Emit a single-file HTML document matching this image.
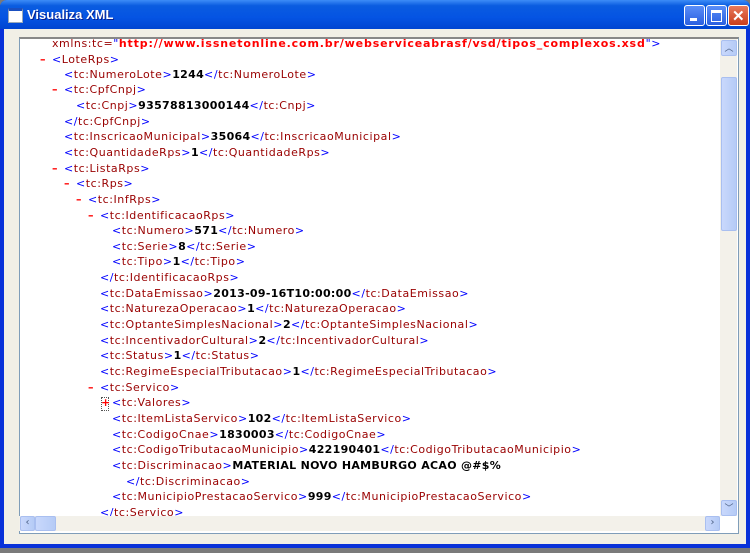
<!DOCTYPE html>
<html><head><style>
body{margin:0;width:750px;height:553px;background:#7a7a7a;position:relative;overflow:hidden;font-family:"DejaVu Sans","Liberation Sans",sans-serif}
.win{position:absolute;left:0;top:0;width:750px;height:548px;background:#0831d9;border-radius:7px 7px 0 0}
.title{position:absolute;left:0;top:0;width:750px;height:29px;background:linear-gradient(#3d8cf7,#0a5ce0 20%,#0554e3 60%,#0045d1);border-radius:7px 7px 0 0}
.title span{position:absolute;left:27px;top:7px;color:#fff;font:bold 13px "Liberation Sans",sans-serif;text-shadow:1px 1px #0a1e8c}
.ico{position:absolute;left:8px;top:8px;width:13px;height:11px;background:#fff;border:1px solid #9ab;border-top:3px solid #1a4fc0}
.btn{position:absolute;top:5px;width:19px;height:19px;border:1px solid #fff;border-radius:3px;background:linear-gradient(#5a8ef8,#2a5fe0)}
.client{position:absolute;left:4px;top:29px;width:742px;height:515px;background:#f1efe6}
.box{position:absolute;left:19px;top:37px;width:718px;height:494px;background:#fff;border:1px solid #7f9db9;border-top:2px solid #888}
.vs{position:absolute;left:720px;top:39px;width:17px;height:477px;background:#f3f1ea}
.hs{position:absolute;left:19px;top:516px;width:701px;height:15px;background:#f3f1ea}
.sb{position:absolute;background:linear-gradient(90deg,#c9d8fc,#b5cbf6);border:1px solid #a9bff0;border-radius:2px}
.l{position:absolute;font-size:11px;letter-spacing:0.55px;white-space:pre;line-height:14px;margin-top:1px}
.b{color:#0000ff}.t{color:#990000}.v{color:#000;font-weight:bold;letter-spacing:0.3px}.m{color:#ff0000;position:absolute;font-size:11px;font-weight:bold;margin-top:1px}
</style></head><body>
<div class="win"></div>
<div class="title"><div class="ico"></div><span>Visualiza XML</span>
<div class="btn" style="left:684px"><div style="position:absolute;left:5px;top:12px;width:7px;height:3px;background:#fff"></div></div>
<div class="btn" style="left:706px"><div style="position:absolute;left:4px;top:4px;width:9px;height:8px;border:1px solid #fff;border-top:3px solid #fff"></div></div>
<div class="btn" style="left:728px;background:linear-gradient(#e87a5c,#c93e1c)"><div style="position:absolute;left:3px;top:1px;color:#fff;font:bold 15px 'Liberation Sans'">✕</div></div>
</div>
<div class="client"></div>
<div class="box"></div>
<div class="vs"><div class="sb" style="left:1px;top:1px;width:14px;height:14px;color:#4d6185;font-size:9px;text-align:center">︿</div><div class="sb" style="left:1px;top:38px;width:14px;height:152px"></div><div class="sb" style="left:1px;top:461px;width:14px;height:14px;color:#4d6185;font-size:9px;text-align:center">﹀</div></div>
<div class="hs"><div class="sb" style="left:1px;top:0;width:13px;height:13px;color:#4d6185;font-size:10px;text-align:center">‹</div><div class="sb" style="left:16px;top:0;width:19px;height:13px"></div><div class="sb" style="left:686px;top:0;width:13px;height:13px;color:#4d6185;font-size:10px;text-align:center">›</div></div>

<div style="position:absolute;left:20px;top:39px;width:700px;height:12px;overflow:hidden"><div class="l" style="left:32px;top:-3px"><span class="t">xmlns:tc=</span><span class="b">"</span><span style="color:#ff0000;font-weight:bold;letter-spacing:0.85px">http://www.issnetonline.com.br/webserviceabrasf/vsd/tipos_complexos.xsd</span><span class="b">"&gt;</span></div></div>
<span class="m" style="left:40px;top:52px">–</span><div class="l" style="left:52px;top:52px"><span class="b">&lt;</span><span class="t">LoteRps</span><span class="b">&gt;</span></div>
<div class="l" style="left:64px;top:67px"><span class="b">&lt;</span><span class="t">tc:NumeroLote</span><span class="b">&gt;</span><span class="v">1244</span><span class="b">&lt;/</span><span class="t">tc:NumeroLote</span><span class="b">&gt;</span></div>
<span class="m" style="left:52px;top:82px">–</span><div class="l" style="left:64px;top:82px"><span class="b">&lt;</span><span class="t">tc:CpfCnpj</span><span class="b">&gt;</span></div>
<div class="l" style="left:76px;top:98px"><span class="b">&lt;</span><span class="t">tc:Cnpj</span><span class="b">&gt;</span><span class="v">93578813000144</span><span class="b">&lt;/</span><span class="t">tc:Cnpj</span><span class="b">&gt;</span></div>
<div class="l" style="left:64px;top:114px"><span class="b">&lt;/</span><span class="t">tc:CpfCnpj</span><span class="b">&gt;</span></div>
<div class="l" style="left:64px;top:129px"><span class="b">&lt;</span><span class="t">tc:InscricaoMunicipal</span><span class="b">&gt;</span><span class="v">35064</span><span class="b">&lt;/</span><span class="t">tc:InscricaoMunicipal</span><span class="b">&gt;</span></div>
<div class="l" style="left:64px;top:145px"><span class="b">&lt;</span><span class="t">tc:QuantidadeRps</span><span class="b">&gt;</span><span class="v">1</span><span class="b">&lt;/</span><span class="t">tc:QuantidadeRps</span><span class="b">&gt;</span></div>
<span class="m" style="left:52px;top:161px">–</span><div class="l" style="left:64px;top:161px"><span class="b">&lt;</span><span class="t">tc:ListaRps</span><span class="b">&gt;</span></div>
<span class="m" style="left:64px;top:176px">–</span><div class="l" style="left:76px;top:176px"><span class="b">&lt;</span><span class="t">tc:Rps</span><span class="b">&gt;</span></div>
<span class="m" style="left:76px;top:192px">–</span><div class="l" style="left:88px;top:192px"><span class="b">&lt;</span><span class="t">tc:InfRps</span><span class="b">&gt;</span></div>
<span class="m" style="left:88px;top:208px">–</span><div class="l" style="left:100px;top:208px"><span class="b">&lt;</span><span class="t">tc:IdentificacaoRps</span><span class="b">&gt;</span></div>
<div class="l" style="left:112px;top:223px"><span class="b">&lt;</span><span class="t">tc:Numero</span><span class="b">&gt;</span><span class="v">571</span><span class="b">&lt;/</span><span class="t">tc:Numero</span><span class="b">&gt;</span></div>
<div class="l" style="left:112px;top:239px"><span class="b">&lt;</span><span class="t">tc:Serie</span><span class="b">&gt;</span><span class="v">8</span><span class="b">&lt;/</span><span class="t">tc:Serie</span><span class="b">&gt;</span></div>
<div class="l" style="left:112px;top:254px"><span class="b">&lt;</span><span class="t">tc:Tipo</span><span class="b">&gt;</span><span class="v">1</span><span class="b">&lt;/</span><span class="t">tc:Tipo</span><span class="b">&gt;</span></div>
<div class="l" style="left:100px;top:270px"><span class="b">&lt;/</span><span class="t">tc:IdentificacaoRps</span><span class="b">&gt;</span></div>
<div class="l" style="left:100px;top:286px"><span class="b">&lt;</span><span class="t">tc:DataEmissao</span><span class="b">&gt;</span><span class="v">2013-09-16T10:00:00</span><span class="b">&lt;/</span><span class="t">tc:DataEmissao</span><span class="b">&gt;</span></div>
<div class="l" style="left:100px;top:301px"><span class="b">&lt;</span><span class="t">tc:NaturezaOperacao</span><span class="b">&gt;</span><span class="v">1</span><span class="b">&lt;/</span><span class="t">tc:NaturezaOperacao</span><span class="b">&gt;</span></div>
<div class="l" style="left:100px;top:317px"><span class="b">&lt;</span><span class="t">tc:OptanteSimplesNacional</span><span class="b">&gt;</span><span class="v">2</span><span class="b">&lt;/</span><span class="t">tc:OptanteSimplesNacional</span><span class="b">&gt;</span></div>
<div class="l" style="left:100px;top:333px"><span class="b">&lt;</span><span class="t">tc:IncentivadorCultural</span><span class="b">&gt;</span><span class="v">2</span><span class="b">&lt;/</span><span class="t">tc:IncentivadorCultural</span><span class="b">&gt;</span></div>
<div class="l" style="left:100px;top:348px"><span class="b">&lt;</span><span class="t">tc:Status</span><span class="b">&gt;</span><span class="v">1</span><span class="b">&lt;/</span><span class="t">tc:Status</span><span class="b">&gt;</span></div>
<div class="l" style="left:100px;top:364px"><span class="b">&lt;</span><span class="t">tc:RegimeEspecialTributacao</span><span class="b">&gt;</span><span class="v">1</span><span class="b">&lt;/</span><span class="t">tc:RegimeEspecialTributacao</span><span class="b">&gt;</span></div>
<span class="m" style="left:88px;top:380px">–</span><div class="l" style="left:100px;top:380px"><span class="b">&lt;</span><span class="t">tc:Servico</span><span class="b">&gt;</span></div>
<div style="position:absolute;left:101px;top:397px;width:6px;height:12px;border:1px dotted #555"></div><span class="m" style="left:101px;top:395px">+</span><div class="l" style="left:112px;top:395px"><span class="b">&lt;</span><span class="t">tc:Valores</span><span class="b">&gt;</span></div>
<div class="l" style="left:112px;top:411px"><span class="b">&lt;</span><span class="t">tc:ItemListaServico</span><span class="b">&gt;</span><span class="v">102</span><span class="b">&lt;/</span><span class="t">tc:ItemListaServico</span><span class="b">&gt;</span></div>
<div class="l" style="left:112px;top:427px"><span class="b">&lt;</span><span class="t">tc:CodigoCnae</span><span class="b">&gt;</span><span class="v">1830003</span><span class="b">&lt;/</span><span class="t">tc:CodigoCnae</span><span class="b">&gt;</span></div>
<div class="l" style="left:112px;top:442px"><span class="b">&lt;</span><span class="t">tc:CodigoTributacaoMunicipio</span><span class="b">&gt;</span><span class="v">422190401</span><span class="b">&lt;/</span><span class="t">tc:CodigoTributacaoMunicipio</span><span class="b">&gt;</span></div>
<div class="l" style="left:112px;top:458px"><span class="b">&lt;</span><span class="t">tc:Discriminacao</span><span class="b">&gt;</span><span class="v">MATERIAL NOVO HAMBURGO ACAO @#$%</span></div>
<div class="l" style="left:126px;top:474px"><span class="b">&lt;/</span><span class="t">tc:Discriminacao</span><span class="b">&gt;</span></div>
<div class="l" style="left:112px;top:489px"><span class="b">&lt;</span><span class="t">tc:MunicipioPrestacaoServico</span><span class="b">&gt;</span><span class="v">999</span><span class="b">&lt;/</span><span class="t">tc:MunicipioPrestacaoServico</span><span class="b">&gt;</span></div>
<div style="position:absolute;left:20px;top:505px;width:700px;height:11px;overflow:hidden"><div class="l" style="left:80px;top:0"><span class="b">&lt;/</span><span class="t">tc:Servico</span><span class="b">&gt;</span></div></div>
<div style="position:absolute;left:0;top:548px;width:750px;height:5px;background:#7a7a7a"></div>
</body></html>
